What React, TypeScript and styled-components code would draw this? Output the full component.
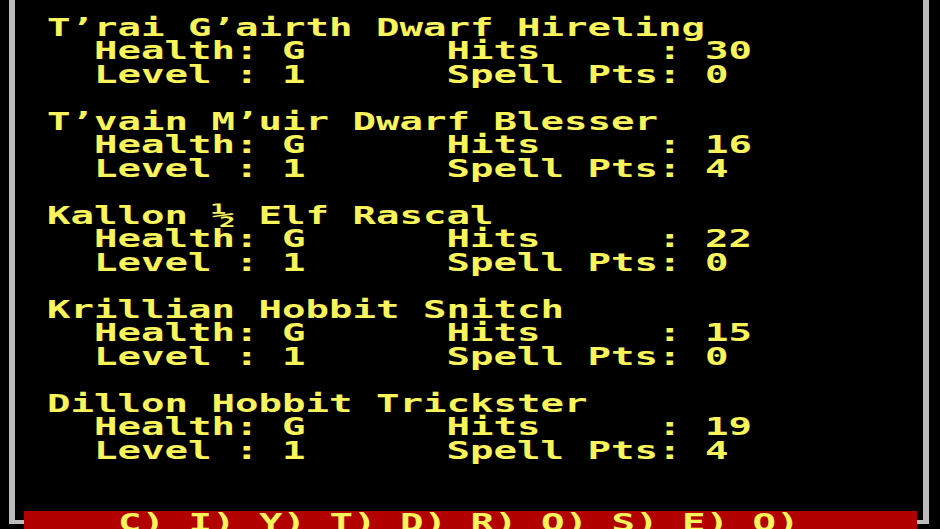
import styled, { createGlobalStyle } from 'styled-components';

const CHAR_W = 23.5;
const FONT_SIZE = 25;
const SCALE_X = CHAR_W / (FONT_SIZE * 0.60205);

const YELLOW = '#f8f45a';
const GREY = '#bcbcbc';
const RED = '#b20000';

type Member = {
  name: string;
  health: string;
  hits: number;
  level: number;
  spell: number;
};

const party: Member[] = [
  { name: 'T’rai G’airth Dwarf Hireling', health: 'G', hits: 30, level: 1, spell: 0 },
  { name: 'T’vain M’uir Dwarf Blesser', health: 'G', hits: 16, level: 1, spell: 4 },
  { name: 'Kallon ½ Elf Rascal', health: 'G', hits: 22, level: 1, spell: 0 },
  { name: 'Krillian Hobbit Snitch', health: 'G', hits: 15, level: 1, spell: 0 },
  { name: 'Dillon Hobbit Trickster', health: 'G', hits: 19, level: 1, spell: 4 },
];

const commands = ['C', 'I', 'Y', 'T', 'D', 'R', 'Q', 'S', 'E', 'O'];

const GlobalStyle = createGlobalStyle`
  html, body {
    margin: 0;
    padding: 0;
    background: #000;
  }
`;

const Screen = styled.div`
  width: 940px;
  height: 529px;
  background: #000;
  overflow: hidden;
  display: flex;
`;

const Frame = styled.div`
  box-sizing: border-box;
  margin-left: 9px;
  width: 920px;
  height: 524px;
  border-left: 6px solid ${GREY};
  border-right: 6px solid ${GREY};
  border-bottom: 4px solid ${GREY};
  display: flex;
  flex-direction: column;
`;

const Roster = styled.div`
  flex: 1;
  padding: 15.8px 0 0 32px;
`;

const Line = styled.div`
  height: ${CHAR_W}px;
  font-family: 'DejaVu Sans Mono', 'Liberation Mono', monospace;
  font-weight: bold;
  font-size: ${FONT_SIZE}px;
  line-height: ${CHAR_W}px;
  white-space: pre;
  color: ${YELLOW};
  transform: scaleX(${SCALE_X});
  transform-origin: 0 0;
`;

const Block = styled.div`
  margin-bottom: ${CHAR_W}px;
`;

const MenuBar = styled.div`
  flex: none;
  height: ${CHAR_W}px;
  margin: 0 6.3px -14.2px 9px;
  padding-left: ${CHAR_W * 4 - 0.5}px;
  background: ${RED};
`;

const pad = (s: string, n: number) => s + ' '.repeat(Math.max(0, n - s.length));

const MemberBlock = ({ m }: { m: Member }) => (
  <Block>
    <Line>{m.name}</Line>
    <Line>{pad(`  Health: ${m.health}`, 17) + `Hits     : ${m.hits}`}</Line>
    <Line>{pad(`  Level : ${m.level}`, 17) + `Spell Pts: ${m.spell}`}</Line>
  </Block>
);

export default function App() {
  return (
    <>
      <GlobalStyle />
      <Screen>
        <Frame>
          <Roster>
            {party.map((m) => (
              <MemberBlock key={m.name} m={m} />
            ))}
          </Roster>
          <MenuBar>
            <Line>{commands.map((c) => `${c})`).join(' ')}</Line>
          </MenuBar>
        </Frame>
      </Screen>
    </>
  );
}
